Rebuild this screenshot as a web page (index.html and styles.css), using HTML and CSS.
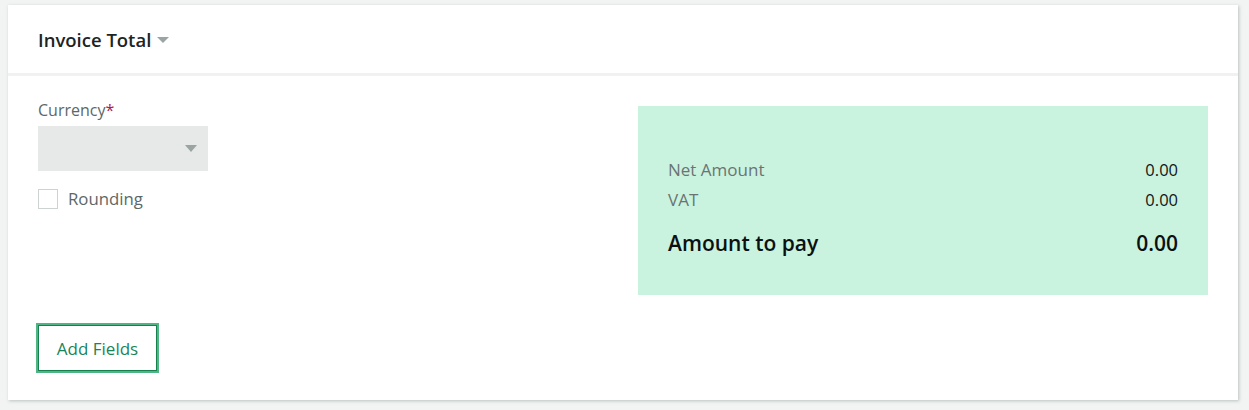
FILE: index.html
```html
<!DOCTYPE html>
<html lang="en">
<head>
<meta charset="utf-8">
<title>Invoice Total</title>
<link rel="stylesheet" href="styles.css">
</head>
<body>
<section class="card">
  <header class="card-header">
    <h2 class="title">Invoice Total</h2>
    <svg class="title-caret" width="12" height="7" viewBox="0 0 12 7"><path d="M0 0h12L6 6z" fill="#9aa5a3"/></svg>
  </header>
  <div class="card-body">
    <div class="columns">
      <div class="left">
        <label class="field-label">Currency<span class="req">*</span></label>
        <div class="select">
          <svg class="select-caret" width="12" height="7" viewBox="0 0 12 7"><path d="M0 0h12L6 7z" fill="#9aa5a3"/></svg>
        </div>
        <label class="check-row">
          <span class="checkbox"></span>
          <span class="check-text">Rounding</span>
        </label>
      </div>
      <div class="totals">
        <div class="row"><span class="row-label">Net Amount</span><span class="row-value">0.00</span></div>
        <div class="row"><span class="row-label">VAT</span><span class="row-value">0.00</span></div>
        <div class="row total"><span>Amount to pay</span><span>0.00</span></div>
      </div>
    </div>
    <button class="add-btn">Add Fields</button>
  </div>
</section>
</body>
</html>
```
FILE: styles.css
```css
html, body {
  margin: 0;
  padding: 0;
}
body {
  background: #f2f3f3;
  padding: 5px 11px 10px 8px;
  font-family: "Open Sans", "Noto Sans", sans-serif;
}
.card {
  background: #fff;
  height: 395px;
  box-shadow: 1px 1px 3px rgba(140, 155, 150, 0.55);
  box-sizing: border-box;
}
.card-header {
  height: 68px;
  border-bottom: 3px solid #f0f1f1;
  display: flex;
  align-items: center;
  padding-left: 30px;
  gap: 6px;
}
.title {
  margin: 0;
  font-size: 18.5px;
  font-weight: 600;
  color: #1c2424;
}
.title-caret {
  margin-top: 3px;
}
.card-body {
  padding: 24px 30px 0 30px;
}
.columns {
  display: flex;
  justify-content: space-between;
}
.left {
  display: flex;
  flex-direction: column;
  align-items: flex-start;
}
.field-label {
  font-size: 16px;
  line-height: 20px;
  color: #5c6868;
}
.req {
  color: #b3124a;
}
.select {
  margin-top: 6px;
  width: 170px;
  height: 45px;
  background: #e6e9e8;
  display: flex;
  align-items: center;
  justify-content: flex-end;
  padding-right: 11px;
  box-sizing: border-box;
}
.check-row {
  margin-top: 17px;
  display: flex;
  align-items: center;
  gap: 10px;
}
.checkbox {
  width: 20px;
  height: 20px;
  box-sizing: border-box;
  border: 1px solid #cdd3d3;
  background: #fff;
}
.check-text {
  font-size: 16.8px;
  line-height: 20px;
  color: #5c6868;
  margin-top: 1px;
}
.totals {
  margin-top: 6px;
  width: 570px;
  height: 189px;
  box-sizing: border-box;
  background: #c9f3df;
  padding: 48px 30px 0 30px;
}
.row {
  display: flex;
  justify-content: space-between;
  align-items: center;
  height: 30px;
}
.row-label {
  font-size: 17px;
  color: #6b7473;
}
.row-value {
  font-size: 16.5px;
  color: #121616;
}
.row.total {
  margin-top: 12px;
  height: 34px;
  font-size: 21px;
  font-weight: 600;
  color: #0c1010;
}
.add-btn {
  margin-top: 30px;
  width: 119px;
  height: 46px;
  background: #fff;
  border: 1px solid #17804f;
  box-shadow: 0 0 0 2px #4fb584;
  color: #1a8458;
  font-family: inherit;
  font-size: 17px;
  padding: 0;
  cursor: pointer;
}
```
